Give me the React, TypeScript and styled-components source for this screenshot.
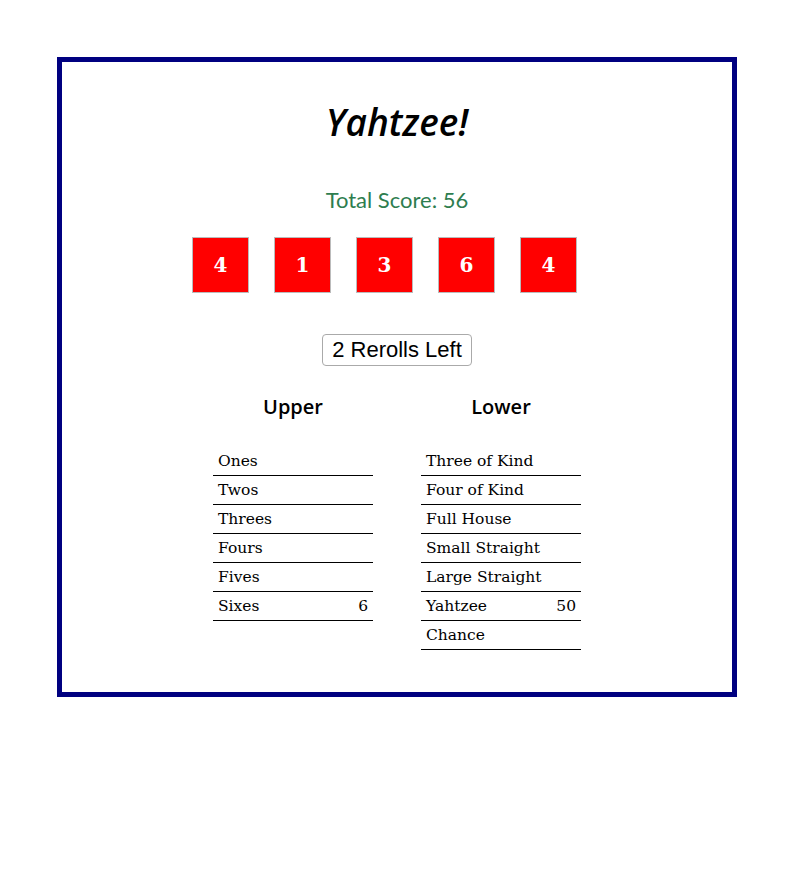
import React from "react";
import styled, { createGlobalStyle } from "styled-components";

const Global = createGlobalStyle`
  html, body { margin: 0; padding: 0; background: #fff; }
  body { padding: 57px 0 0 57px; }
`;

const Board = styled.div`
  box-sizing: border-box;
  width: 680px;
  height: 640px;
  border: 5px solid #000080;
  display: flex;
  flex-direction: column;
  align-items: center;
  padding-top: 33px;
`;

const Title = styled.h1`
  margin: 0;
  font-family: "Open Sans", sans-serif;
  font-style: italic;
  font-weight: 600;
  font-size: 37px;
  line-height: 54px;
  color: #000;
`;

const Score = styled.div`
  margin-top: 37px;
  font-family: Lato, sans-serif;
  font-size: 22px;
  line-height: 28px;
  color: #2e7d4f;
`;

const DiceRow = styled.div`
  display: flex;
  margin-top: 23px;
`;

const Die = styled.div`
  box-sizing: border-box;
  width: 57px;
  height: 56px;
  margin-right: 25px;
  background: #ff0000;
  border: 1px solid #bbb;
  display: flex;
  align-items: center;
  justify-content: center;
  font-family: "DejaVu Serif", serif;
  font-weight: bold;
  font-size: 20px;
  color: #fff;
`;

const Reroll = styled.button`
  margin-top: 41px;
  height: 32px;
  padding: 0 9px;
  font-family: "Liberation Sans", Arial, sans-serif;
  font-size: 22px;
  background: #fff;
  color: #000;
  border: 1px solid #aaa;
  border-radius: 4px;
`;

const Sections = styled.div`
  display: flex;
  gap: 48px;
  margin-top: 27px;
`;

const Section = styled.div`
  width: 160px;
  display: flex;
  flex-direction: column;
  align-items: center;
`;

const Heading = styled.h2`
  margin: 0;
  font-family: "Open Sans", sans-serif;
  font-weight: 600;
  font-size: 20px;
  line-height: 28px;
  color: #000;
`;

const Table = styled.div`
  width: 160px;
  margin-top: 26px;
`;

const Row = styled.div`
  display: flex;
  justify-content: space-between;
  height: 28px;
  border-bottom: 1px solid #000;
  padding: 0 5px;
  font-family: "DejaVu Serif", serif;
  font-size: 15.5px;
  line-height: 28px;
  color: #000;
`;

const upper: [string, string][] = [
  ["Ones", ""],
  ["Twos", ""],
  ["Threes", ""],
  ["Fours", ""],
  ["Fives", ""],
  ["Sixes", "6"],
];
const lower: [string, string][] = [
  ["Three of Kind", ""],
  ["Four of Kind", ""],
  ["Full House", ""],
  ["Small Straight", ""],
  ["Large Straight", ""],
  ["Yahtzee", "50"],
  ["Chance", ""],
];

export default function App() {
  return (
    <>
      <Global />
      <Board>
        <Title>Yahtzee!</Title>
        <Score>Total Score: 56</Score>
        <DiceRow>
          {[4, 1, 3, 6, 4].map((d, i) => (
            <Die key={i}>{d}</Die>
          ))}
        </DiceRow>
        <Reroll>2 Rerolls Left</Reroll>
        <Sections>
          <Section>
            <Heading>Upper</Heading>
            <Table>
              {upper.map(([n, v]) => (
                <Row key={n}>
                  <span>{n}</span>
                  <span>{v}</span>
                </Row>
              ))}
            </Table>
          </Section>
          <Section>
            <Heading>Lower</Heading>
            <Table>
              {lower.map(([n, v]) => (
                <Row key={n}>
                  <span>{n}</span>
                  <span>{v}</span>
                </Row>
              ))}
            </Table>
          </Section>
        </Sections>
      </Board>
    </>
  );
}
